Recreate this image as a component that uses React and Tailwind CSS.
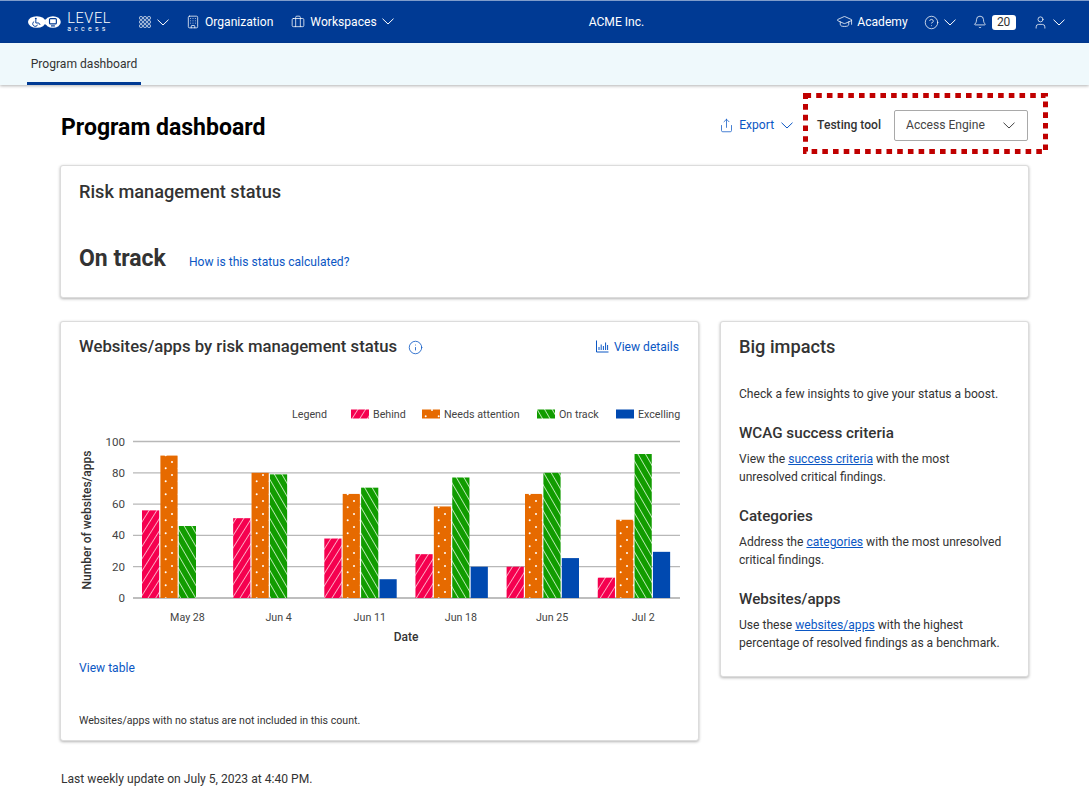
import React from 'react';
import { Bell, Briefcase, Building, CircleHelp, GraduationCap, Info, Share, User } from 'lucide-react';

const groups = [
  { label: 'May 28', values: [56, 91, 46, 0] },
  { label: 'Jun 4', values: [51, 80, 79, 0] },
  { label: 'Jun 11', values: [38, 66.5, 70.5, 12] },
  { label: 'Jun 18', values: [28, 58.5, 77, 20] },
  { label: 'Jun 25', values: [20, 66.5, 80, 25.5] },
  { label: 'Jul 2', values: [13, 50, 92, 29.5] },
];

const fills = ['url(#behind)', 'url(#attention)', 'url(#ontrack)', '#0049b0'];
const legend = [
  { label: 'Behind', x: 351, fill: fills[0] },
  { label: 'Needs attention', x: 422, fill: fills[1] },
  { label: 'On track', x: 537, fill: fills[2] },
  { label: 'Excelling', x: 616, fill: fills[3] },
];

const zeroY = 598;
const unit = 1.565;

const Chevron = ({ className = '' }) => (
  <svg width="12" height="7" viewBox="0 0 12 7" fill="none" stroke="currentColor" strokeWidth="1" className={className} aria-hidden="true">
    <path d="M0.5 0.7L6 6L11.5 0.7" />
  </svg>
);

const Logo = () => (
  <div className="flex w-[83px] items-center gap-[6px]">
    <svg width="34" height="14" viewBox="0 0 34 14" aria-hidden="true">
      <ellipse cx="9" cy="7" rx="9" ry="6" fill="#fff" />
      <ellipse cx="25.5" cy="7" rx="8" ry="6" fill="#fff" />
      <path d="M19 4l-2 3 2 3" stroke="#fff" strokeWidth="1.3" fill="none" />
      <circle cx="8" cy="3.6" r="1" fill="#003a94" />
      <path d="M8 5v3h3l1.4 2M6.3 6.5a2.6 2.6 0 1 0 3.6 3.2" stroke="#003a94" strokeWidth="1" fill="none" />
      <rect x="22" y="3.5" width="7" height="5.5" rx="1" stroke="#003a94" strokeWidth="1.2" fill="none" />
      <path d="M23.5 11h4" stroke="#003a94" strokeWidth="1.2" />
    </svg>
    <div className="flex flex-col items-start leading-none text-white">
      <span className="text-[14.5px] font-light leading-[14px] tracking-[0.6px]">LEVEL</span>
      <span className="text-[7px] leading-[7px] tracking-[3.2px]">access</span>
    </div>
  </div>
);

const AppsIcon = () => (
  <svg width="12" height="12" viewBox="0 0 12 12" fill="none" stroke="#fff" strokeWidth="0.8" aria-hidden="true">
    {[0, 1, 2].map((r) =>
      [0, 1, 2].map((c) => <rect key={`${r}-${c}`} x={0.6 + c * 4} y={0.6 + r * 4} width="2.8" height="2.8" rx="0.8" />),
    )}
  </svg>
);

const DetailsIcon = () => (
  <svg width="13" height="13" viewBox="0 0 13 13" fill="none" stroke="#0b57c4" strokeWidth="1" aria-hidden="true">
    <path d="M0.5 0.5v11.5h12" />
    <path d="M3 10V7M5.2 10V4.5M7.4 10V6M9.6 10V2.5M11.6 10V5" />
  </svg>
);

const TopBar = () => (
  <header className="flex h-[43px] items-center whitespace-nowrap border-t border-[#7f9ccb] bg-[#003a94] text-[12.1px] text-white">
    <div className="ml-[28px]">
      <Logo />
    </div>
    <div className="ml-[28px] flex items-center gap-[6px]">
      <AppsIcon />
      <Chevron />
    </div>
    <div className="ml-[17px] flex items-center gap-[5px]">
      <Building size={14} strokeWidth={1.3} />
      <span>Organization</span>
    </div>
    <div className="ml-[18px] flex items-center gap-[5px]">
      <Briefcase size={14} strokeWidth={1.3} />
      <span>Workspaces</span>
      <Chevron />
    </div>
    <div className="ml-[195px]">ACME Inc.</div>
    <div className="ml-[192px] flex items-center gap-[4px]">
      <GraduationCap size={17} strokeWidth={1.1} />
      <span>Academy</span>
    </div>
    <div className="ml-[16px] flex items-center gap-[5px]">
      <CircleHelp size={15} strokeWidth={1.2} />
      <Chevron />
    </div>
    <div className="ml-[17px] flex items-center gap-[5px]">
      <Bell size={14} strokeWidth={1.3} />
      <span className="flex h-[15px] w-[24px] items-center justify-center rounded-[3px] bg-white text-[12px] text-[#333]">20</span>
    </div>
    <div className="ml-[17px] flex items-center gap-[5px]">
      <User size={15} strokeWidth={1.2} />
      <Chevron />
    </div>
  </header>
);

const TabBar = () => (
  <nav className="flex h-[42px] items-stretch bg-[#eff9fc] pl-[27px] shadow-[0_1px_3px_rgba(0,0,0,0.3)]">
    <div className="flex w-[114px] items-center justify-center whitespace-nowrap border-b-[3px] border-[#003a94] pt-[4px] text-[12.1px] text-[#333]">
      Program dashboard
    </div>
  </nav>
);

const PageHeader = () => (
  <div className="flex h-[31px] items-center justify-between pr-[1px]">
    <h1 className="ml-[1px] mt-[3px] text-[23px] font-bold leading-[31px] text-black">Program dashboard</h1>
    <div className="flex items-center">
      <div className="flex items-center text-[12.1px] text-[#0b57c4]">
        <Share size={15} strokeWidth={1.2} />
        <span className="ml-[5px]">Export</span>
        <Chevron className="ml-[7px]" />
      </div>
      <div className="relative ml-[24px] flex items-center">
        <span className="text-[12.1px] font-medium text-[#333]">Testing tool</span>
        <div className="ml-[13px] flex h-[31px] w-[134px] items-center justify-between rounded-[2px] border border-[#a9a9a9] pl-[11px] pr-[12px] text-[12.1px] text-[#444]">
          <span>Access Engine</span>
          <Chevron />
        </div>
        <svg className="absolute left-[-14px] top-[-17px]" width="245" height="61" aria-hidden="true">
          <rect x="2.5" y="2.5" width="240" height="56" fill="none" stroke="#c00000" strokeWidth="5" strokeDasharray="5.6 5.1" />
        </svg>
      </div>
    </div>
  </div>
);

const StatusCard = () => (
  <section className="h-[133px] rounded-[3px] border border-[#dcdcdc] bg-white px-[18px] pt-[15px] shadow-[0_1px_3px_rgba(0,0,0,0.3)]">
    <h2 className="text-[18.2px] font-medium leading-[22px] text-[#333]">Risk management status</h2>
    <div className="mt-[39px] flex items-baseline">
      <span className="text-[23px] font-bold leading-[34px] text-[#333]">On track</span>
      <a className="ml-[23px] text-[12.1px] text-[#0b57c4]">How is this status calculated?</a>
    </div>
  </section>
);

const Patterns = () => (
  <defs>
    <pattern id="behind" width="6.5" height="9" patternUnits="userSpaceOnUse" patternTransform="rotate(32)">
      <rect width="6.5" height="9" fill="#f5004f" />
      <rect width="0.9" height="9" fill="#ffb0c8" />
    </pattern>
    <pattern id="attention" x="0" y="3" width="13" height="13" patternUnits="userSpaceOnUse">
      <rect width="13" height="13" fill="#e66a00" />
      <circle cx="9.7" cy="10.3" r="1" fill="#fff" />
      <circle cx="3" cy="4" r="1" fill="#fff" />
    </pattern>
    <pattern id="ontrack" width="6.5" height="9" patternUnits="userSpaceOnUse" patternTransform="rotate(-30)">
      <rect width="6.5" height="9" fill="#119c00" />
      <rect width="0.9" height="9" fill="#c0ecb8" />
    </pattern>
  </defs>
);

const Chart = () => (
  <svg width="620" height="250" viewBox="70 400 620 250" className="block" fontFamily="Roboto, sans-serif" fontSize="10.7" fill="#444">
    <Patterns />
    <text x="292" y="418">Legend</text>
    {legend.map((item) => (
      <g key={item.label}>
        <rect x={item.x} y="409.5" width="18" height="9" fill={item.fill} />
        <text x={item.x + 22} y="418">{item.label}</text>
      </g>
    ))}
    {[0, 20, 40, 60, 80, 100].map((tick) => (
      <g key={tick}>
        <line x1="133" x2="680" y1={zeroY - tick * unit} y2={zeroY - tick * unit} stroke={tick === 0 ? '#a8a8a8' : '#b8b8b8'} strokeWidth="1.3" />
        <text x="125" y={zeroY - tick * unit + 4} textAnchor="end" fontSize="11.6">{tick}</text>
      </g>
    ))}
    {groups.map((group, g) => {
      const left = 142 + g * 91.15;
      return (
        <g key={group.label}>
          {group.values.map((value, i) =>
            value > 0 ? (
              <rect key={i} x={left + i * 18.4} y={zeroY - value * unit} width="17.2" height={value * unit} fill={fills[i]} />
            ) : null,
          )}
          <text x={left + 45.5} y="621" textAnchor="middle">{group.label}</text>
        </g>
      );
    })}
    <text transform="translate(91 520) rotate(-90)" textAnchor="middle" fontSize="12" fontWeight="500" fill="#333">Number of websites/apps</text>
    <text x="406" y="641" textAnchor="middle" fontSize="12" fontWeight="500" fill="#333">Date</text>
  </svg>
);

const ChartCard = () => (
  <section className="h-[420px] w-[639px] rounded-[3px] border border-[#dcdcdc] bg-white shadow-[0_1px_3px_rgba(0,0,0,0.3)]">
    <div className="flex items-center justify-between pl-[18px] pr-[19px] pt-[14px]">
      <div className="flex items-center">
        <h2 className="whitespace-nowrap text-[16.7px] font-medium leading-[22px] text-[#333]">Websites/apps by risk management status</h2>
        <Info size={15} strokeWidth={1.3} className="ml-[11px] text-[#0b57c4]" />
      </div>
      <div className="flex items-center gap-[5px] text-[12.1px] text-[#0b57c4]">
        <DetailsIcon />
        <span>View details</span>
      </div>
    </div>
    <div className="ml-[9px] mt-[42px]">
      <Chart />
    </div>
    <a className="ml-[18px] mt-[10px] block text-[12.1px] leading-[16px] text-[#0b57c4]">View table</a>
    <p className="ml-[18px] mt-[38px] text-[10.6px] leading-[14px] text-[#333]">Websites/apps with no status are not included in this count.</p>
  </section>
);

const ImpactLink = ({ children }) => <a className="text-[#0b57c4] underline">{children}</a>;

const ImpactSection = ({ title, children }) => (
  <div>
    <h3 className="text-[15.2px] font-medium leading-[20px] text-[#333]">{title}</h3>
    <p className="mt-[7px] text-[12.1px] leading-[18px] text-[#333]">{children}</p>
  </div>
);

const ImpactsCard = () => (
  <aside className="h-[356px] w-[309px] rounded-[3px] border border-[#dcdcdc] bg-white pl-[18px] pr-[17px] pt-[13px] shadow-[0_1px_3px_rgba(0,0,0,0.3)]">
    <h2 className="text-[18.2px] font-medium leading-[24px] text-[#333]">Big impacts</h2>
    <p className="mt-[26px] text-[12.1px] leading-[18px] text-[#333]">Check a few insights to give your status a boost.</p>
    <div className="mt-[20px] flex flex-col gap-[20px]">
      <ImpactSection title="WCAG success criteria">
        View the <ImpactLink>success criteria</ImpactLink> with the most unresolved critical findings.
      </ImpactSection>
      <ImpactSection title="Categories">
        Address the <ImpactLink>categories</ImpactLink> with the most unresolved critical findings.
      </ImpactSection>
      <ImpactSection title="Websites/apps">
        Use these <ImpactLink>websites/apps</ImpactLink> with the highest percentage of resolved findings as a benchmark.
      </ImpactSection>
    </div>
  </aside>
);

const App = () => (
  <div className="min-h-[811px] overflow-hidden bg-white font-['Roboto',sans-serif]">
    <TopBar />
    <TabBar />
    <main className="w-[1029px] pl-[60px] pt-[25px]">
      <PageHeader />
      <div className="mt-[24px]">
        <StatusCard />
      </div>
      <div className="mt-[23px] flex items-start gap-[21px]">
        <ChartCard />
        <ImpactsCard />
      </div>
      <p className="ml-[1px] mt-[29px] text-[12.1px] leading-[18px] text-[#333]">Last weekly update on July 5, 2023 at 4:40 PM.</p>
    </main>
  </div>
);

export default App;
